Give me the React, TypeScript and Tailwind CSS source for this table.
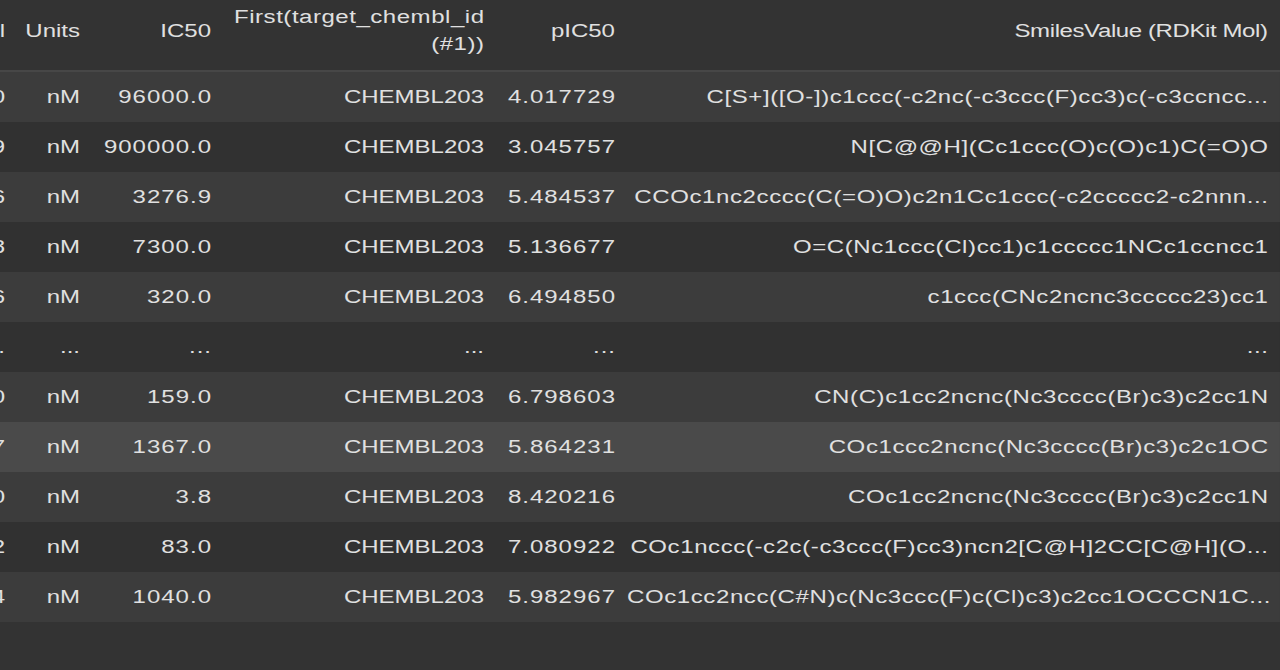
const rows = [
    { idx: "1720", units: "nM", ic50: "96000.0", target: "CHEMBL203", pic50: "4.017729", smiles: "C[S+]([O-])c1ccc(-c2nc(-c3ccc(F)cc3)c(-c3ccncc..." },
    { idx: "2709", units: "nM", ic50: "900000.0", target: "CHEMBL203", pic50: "3.045757", smiles: "N[C@@H](Cc1ccc(O)c(O)c1)C(=O)O" },
    { idx: "1626", units: "nM", ic50: "3276.9", target: "CHEMBL203", pic50: "5.484537", smiles: "CCOc1nc2cccc(C(=O)O)c2n1Cc1ccc(-c2ccccc2-c2nnn..." },
    { idx: "1598", units: "nM", ic50: "7300.0", target: "CHEMBL203", pic50: "5.136677", smiles: "O=C(Nc1ccc(Cl)cc1)c1ccccc1NCc1ccncc1" },
    { idx: "1526", units: "nM", ic50: "320.0", target: "CHEMBL203", pic50: "6.494850", smiles: "c1ccc(CNc2ncnc3ccccc23)cc1" },
    { idx: "...", units: "...", ic50: "...", target: "...", pic50: "...", smiles: "..." },
    { idx: "2850", units: "nM", ic50: "159.0", target: "CHEMBL203", pic50: "6.798603", smiles: "CN(C)c1cc2ncnc(Nc3cccc(Br)c3)c2cc1N" },
    { idx: "1047", units: "nM", ic50: "1367.0", target: "CHEMBL203", pic50: "5.864231", smiles: "COc1ccc2ncnc(Nc3cccc(Br)c3)c2c1OC" },
    { idx: "2630", units: "nM", ic50: "3.8", target: "CHEMBL203", pic50: "8.420216", smiles: "COc1cc2ncnc(Nc3cccc(Br)c3)c2cc1N" },
    { idx: "2162", units: "nM", ic50: "83.0", target: "CHEMBL203", pic50: "7.080922", smiles: "COc1nccc(-c2c(-c3ccc(F)cc3)ncn2[C@H]2CC[C@H](O..." },
    { idx: "1824", units: "nM", ic50: "1040.0", target: "CHEMBL203", pic50: "5.982967", smiles: "COc1cc2ncc(C#N)c(Nc3ccc(F)c(Cl)c3)c2cc1OCCCN1C..." },
];

// hovered row in the screenshot
const HOVER = 7;

export default function App() {
    return (
        <div className="h-screen w-[1280px] overflow-hidden bg-[#333333]">
            {/* the capture is stretched wide, so the table is laid out at 960px and scaled horizontally */}
            <div
                className="w-[960px] origin-top-left scale-x-[1.3333] text-[#e0e0e0] text-[18px]"
                style={{ fontFamily: '"Liberation Sans", Arial, sans-serif' }}
            >
                {/* Header */}
                <div className="flex h-[72px] border-b-2 border-[#474747] leading-[27px]">
                    <div className="w-[12.75px] shrink-0 flex items-center justify-end pr-[9px] pb-[8px] whitespace-nowrap">Mol</div>
                    <div className="w-[56.25px] shrink-0 flex items-center justify-end pr-[9px] pb-[8px] whitespace-nowrap">Units</div>
                    <div className="w-[98.25px] shrink-0 flex items-center justify-end pr-[9px] pb-[8px] whitespace-nowrap">IC50</div>
                    <div className="w-[204.75px] shrink-0 flex flex-col items-end justify-center pr-[8.6px] pb-[8px] tracking-[0.4px] whitespace-nowrap">
                        <span>First(target_chembl_id</span>
                        <span>(#1))</span>
                    </div>
                    <div className="w-[98.25px] shrink-0 flex items-center justify-end pr-[9px] pb-[8px] whitespace-nowrap">pIC50</div>
                    <div className="flex-1 flex items-center justify-end pr-[9.3px] pb-[8px] tracking-[-0.3px] whitespace-nowrap">
                        SmilesValue (RDKit Mol)
                    </div>
                </div>

                {/* Body */}
                <div className="flex flex-col">
                    {rows.map((r, i) => (
                        <div
                            key={i}
                            className={`flex h-[50px] items-center ${i === HOVER ? "bg-[#4a4a4a]" : i % 2 === 0 ? "bg-[#3c3c3c]" : "bg-[#313131]"}`}
                        >
                            <div className="w-[12.75px] shrink-0 flex justify-end pr-[8.25px] tracking-[0.75px] whitespace-nowrap">{r.idx}</div>
                            <div className="w-[56.25px] shrink-0 flex justify-end pr-[9px] whitespace-nowrap">{r.units}</div>
                            <div className="w-[98.25px] shrink-0 flex justify-end pr-[8.25px] tracking-[0.75px] whitespace-nowrap">{r.ic50}</div>
                            <div className="w-[204.75px] shrink-0 flex justify-end pr-[9px] whitespace-nowrap">{r.target}</div>
                            <div className="w-[98.25px] shrink-0 flex justify-end pr-[8.25px] tracking-[0.75px] whitespace-nowrap">{r.pic50}</div>
                            <div className="flex-1 flex justify-end pr-[8.55px] tracking-[0.45px] whitespace-nowrap">{r.smiles}</div>
                        </div>
                    ))}
                </div>
            </div>
        </div>
    );
}
